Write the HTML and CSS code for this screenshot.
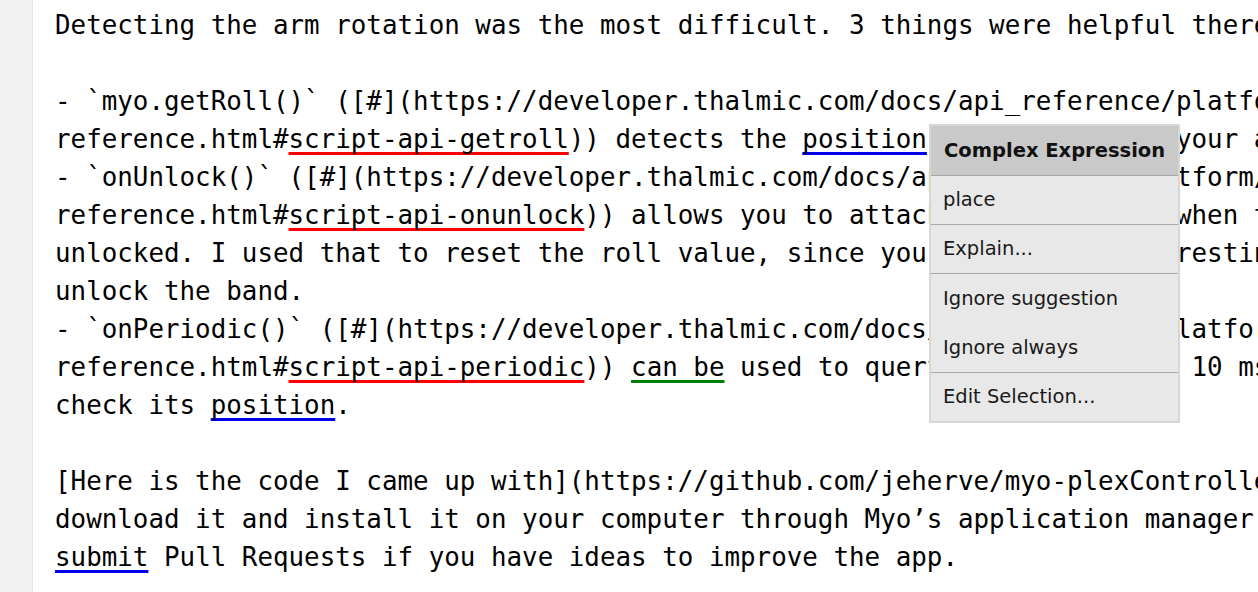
FILE: index.html
```html
<!DOCTYPE html>
<html>
<head>
<meta charset="utf-8">
<link rel="stylesheet" href="styles.css">
</head>
<body>
<div class="window">
  <div class="gutter"></div>
  <div class="editor">
    <div class="line">Detecting the arm rotation was the most difficult. 3 things were helpful there:</div>
    <div class="line"> </div>
    <div class="line">- `myo.getRoll()` ([#](https://developer.thalmic.com/docs/api_reference/platform/script-</div>
    <div class="line">reference.html#<span class="u red">script-api-getroll</span>)) detects the <span class="u blue">position</span> of the band on your arm and</div>
    <div class="line">- `onUnlock()` ([#](https://developer.thalmic.com/docs/api_reference/platform/script-</div>
    <div class="line">reference.html#<span class="u red">script-api-onunlock</span>)) allows you to attach an action for when the band is</div>
    <div class="line">unlocked. I used that to reset the roll value, since you would often be resting your arm</div>
    <div class="line">unlock the band.</div>
    <div class="line">- `onPeriodic()` ([#](https://developer.thalmic.com/docs/api_reference/platform/script-</div>
    <div class="line">reference.html#<span class="u red">script-api-periodic</span>)) <span class="u green">can be</span> used to query the roll every 10 ms and</div>
    <div class="line">check its <span class="u blue">position</span>.</div>
    <div class="line"> </div>
    <div class="line">[Here is the code I came up with](https://github.com/jeherve/myo-plexController). You can</div>
    <div class="line">download it and install it on your computer through Myo’s application manager and</div>
    <div class="line"><span class="u blue">submit</span> Pull Requests if you have ideas to improve the app.</div>
  </div>
  <div class="menu">
    <div class="menu-head">Complex Expression</div>
    <div class="menu-group">
      <div class="menu-item">place</div>
    </div>
    <div class="menu-group">
      <div class="menu-item">Explain...</div>
    </div>
    <div class="menu-group">
      <div class="menu-item tall">Ignore suggestion</div>
      <div class="menu-item tall">Ignore always</div>
    </div>
    <div class="menu-group">
      <div class="menu-item">Edit Selection...</div>
    </div>
  </div>
</div>
</body>
</html>
```

FILE: styles.css
```css
html, body {
  margin: 0;
  padding: 0;
  background: #ffffff;
}

.window {
  position: relative;
  display: flex;
  width: 1258px;
  height: 592px;
  overflow: hidden;
}

.gutter {
  flex: 0 0 32px;
  background: #f1f1f1;
  border-right: 1px solid #e4e4e4;
}

.editor {
  flex: 1;
  min-width: 0;
  padding: 6px 0 0 22px;
  overflow: hidden;
  font-family: "DejaVu Sans Mono", "Liberation Mono", monospace;
  font-size: 25.86px;
  line-height: 38px;
  color: #000;
}

.line {
  height: 38px;
  white-space: pre;
}

.u {
  text-decoration-line: underline;
  text-decoration-thickness: 3px;
  text-underline-offset: 4px;
  text-decoration-skip-ink: none;
}

.red { text-decoration-color: #ff0000; }
.blue { text-decoration-color: #0000f0; }
.green { text-decoration-color: #007f00; }

.menu {
  position: absolute;
  left: 929px;
  top: 124px;
  width: 247px;
  border: 2px solid #d7d7d7;
  background: #e8e8e8;
  font-family: "DejaVu Sans", Verdana, sans-serif;
  font-size: 19.5px;
  color: #1a1a1a;
}

.menu-head {
  height: 49px;
  line-height: 49px;
  padding-left: 13px;
  background: #c9c9c9;
  font-weight: bold;
  color: #111;
}

.menu-group {
  border-top: 1px solid #a8a8a8;
}

.menu-item {
  height: 48px;
  line-height: 47px;
  padding-left: 12px;
}

.menu-item.tall {
  height: 49px;
  line-height: 50px;
}
```
